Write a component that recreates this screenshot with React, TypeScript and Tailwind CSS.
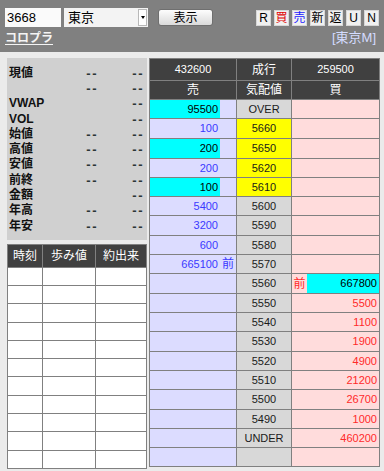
import React from "react";

type Quote = {
  sell?: string;
  sellBar?: boolean;
  sellMark?: string;
  price: string;
  yellow?: boolean;
  buy?: string;
  buyBar?: boolean;
  buyMark?: string;
  h: string;
};

const quotes: Quote[] = [
  { sell: "95500", sellBar: true, price: "OVER", h: "h-[18px]" },
  { sell: "100", price: "5660", yellow: true, h: "h-[19px]" },
  { sell: "200", sellBar: true, price: "5650", yellow: true, h: "h-[19px]" },
  { sell: "200", price: "5620", yellow: true, h: "h-[18px]" },
  { sell: "100", sellBar: true, price: "5610", yellow: true, h: "h-[18px]" },
  { sell: "5400", price: "5600", h: "h-[18px]" },
  { sell: "3200", price: "5590", h: "h-[19px]" },
  { sell: "600", price: "5580", h: "h-[18px]" },
  { sell: "665100", sellMark: "前", price: "5570", h: "h-[18px]" },
  { price: "5560", buyMark: "前", buy: "667800", buyBar: true, h: "h-[19px]" },
  { price: "5550", buy: "5500", h: "h-[18px]" },
  { price: "5540", buy: "1100", h: "h-[18px]" },
  { price: "5530", buy: "1900", h: "h-[19px]" },
  { price: "5520", buy: "4900", h: "h-[18px]" },
  { price: "5510", buy: "21200", h: "h-[18px]" },
  { price: "5500", buy: "26700", h: "h-[19px]" },
  { price: "5490", buy: "1000", h: "h-[18px]" },
  { price: "UNDER", buy: "460200", h: "h-[18px]" },
  { price: "", h: "h-[18px]" },
];

const stats = [
  { label: "現値", a: true },
  { label: "", a: true },
  { label: "VWAP", a: false },
  { label: "VOL", a: false },
  { label: "始値", a: true },
  { label: "高値", a: true },
  { label: "安値", a: true },
  { label: "前終", a: true },
  { label: "金額", a: false },
  { label: "年高", a: true },
  { label: "年安", a: true },
];

const tickRows = [
  "h-[17px]",
  "h-[17px]",
  "h-[18px]",
  "h-[17px]",
  "h-[17px]",
  "h-[17px]",
  "h-[18px]",
  "h-[17px]",
  "h-[17px]",
  "h-[18px]",
  "h-[17px]",
];

const toolButtons = [
  { label: "R", color: "text-black" },
  { label: "買", color: "text-[#e00000]" },
  { label: "売", color: "text-[#1a1aff]" },
  { label: "新", color: "text-black" },
  { label: "返", color: "text-black" },
  { label: "U", color: "text-black" },
  { label: "N", color: "text-black" },
];

const Dash = () => (
  <span className="text-[13px] font-bold tracking-[1.5px] text-[#2b3535]">--</span>
);

export default function App() {
  return (
    <div className="w-[384px] h-[471px] overflow-hidden bg-[#ebebeb] font-['Liberation_Sans','Noto_Sans_CJK_JP',sans-serif]">
      {/* Header bar */}
      <div className="h-[52px] bg-[#808080] px-[5px] pt-[8px]">
        <div className="flex items-start">
          <div className="w-[56px] h-[19px] bg-[#fafafa] flex items-center pl-[2px] text-[13px] text-black">
            3668
          </div>
          <div className="ml-[3px] w-[84px] h-[19px] bg-[#f3f3f3] flex items-center">
            <span className="flex-1 pl-[4px] text-[13px] text-black">東京</span>
            <div className="w-[9px] h-[17px] mr-px bg-white border border-[#b8b8b8] flex items-center justify-center">
              <span className="block w-0 h-0 border-l-[2.5px] border-r-[2.5px] border-t-[3px] border-l-transparent border-r-transparent border-t-black" />
            </div>
          </div>
          <button className="ml-[10px] mt-px w-[55px] h-[17px] rounded-[3px] border border-[#6f6f6f] bg-gradient-to-b from-[#fdfdfd] to-[#dadada] text-[12px] leading-none text-black flex items-center justify-center">
            表示
          </button>
          <div className="ml-auto mt-[2px] flex gap-[3px]">
            {toolButtons.map((b) => (
              <div
                key={b.label}
                className={`w-[15px] h-[16px] bg-[#f0f0f0] border border-[#d6d6d6] flex items-center justify-center text-[12px] leading-none ${b.color}`}
              >
                {b.label}
              </div>
            ))}
          </div>
        </div>
        <div className="mt-[4px] flex items-center justify-between pr-[3px]">
          <span className="text-[12px] font-bold text-[#f4f4f4] underline underline-offset-2 leading-[14px]">
            コロプラ
          </span>
          <span className="text-[13px] text-[#d4dcff] leading-[14px]">[東京M]</span>
        </div>
      </div>

      {/* Body */}
      <div className="flex pt-[6px] pl-[7px] gap-[2px]">
        {/* Left column */}
        <div className="w-[140px] flex flex-col">
          <div className="h-[182px] bg-[#d0d0d0] pt-[7px] pl-[2px] pr-[3px]">
            {stats.map((s, i) => (
              <div key={i} className="h-[15.3px] flex items-center">
                <span className="w-[58px] text-[12px] font-bold text-[#111]">
                  {s.label}
                </span>
                <span className="w-[31px] text-right">{s.a ? <Dash /> : null}</span>
                <span className="flex-1 text-right">
                  <Dash />
                </span>
              </div>
            ))}
          </div>

          <div className="mt-[4px] grid grid-cols-[34px_52px_50px] gap-px bg-[#808080] p-px">
            {["時刻", "歩み値", "約出来"].map((t) => (
              <div
                key={t}
                className="h-[22px] bg-[#404040] text-white text-[12px] flex items-center justify-center"
              >
                {t}
              </div>
            ))}
            {tickRows.map((h, i) => (
              <React.Fragment key={i}>
                <div className={`${h} bg-white`} />
                <div className={`${h} bg-white`} />
                <div className={`${h} bg-white`} />
              </React.Fragment>
            ))}
          </div>
        </div>

        {/* Order board */}
        <div className="w-[231px] self-start grid grid-cols-[86px_54px_87px] gap-px bg-[#808080] p-px text-[11px]">
          <div className="h-[21px] bg-[#404040] text-white flex items-center justify-center">432600</div>
          <div className="h-[21px] bg-[#404040] text-white text-[12px] flex items-center justify-center">成行</div>
          <div className="h-[21px] bg-[#404040] text-white flex items-center justify-center">259500</div>
          <div className="h-[18px] bg-[#404040] text-white text-[12px] flex items-center justify-center">売</div>
          <div className="h-[18px] bg-[#404040] text-white text-[12px] flex items-center justify-center">気配値</div>
          <div className="h-[18px] bg-[#404040] text-white text-[12px] flex items-center justify-center">買</div>

          {quotes.map((q, i) => (
            <React.Fragment key={i}>
              <div className={`${q.h} bg-[#dcdcff] flex`}>
                <div
                  className={`w-[70px] flex items-center justify-end pr-[2px] ${
                    q.sellBar ? "bg-[#00ffff] text-black" : "text-[#3a3aff]"
                  }`}
                >
                  {q.sell}
                </div>
                <div className="flex-1 flex items-center justify-center text-[12px] text-[#3a3aff]">
                  {q.sellMark}
                </div>
              </div>
              <div
                className={`${q.h} ${
                  q.yellow ? "bg-[#ffff00]" : "bg-[#d8d8d8]"
                } flex items-center justify-center text-[#1a1a1a]`}
              >
                {q.price}
              </div>
              <div className={`${q.h} bg-[#ffdcdc] flex`}>
                <div className="w-[15px] flex items-center justify-center text-[12px] text-[#ff2a2a]">
                  {q.buyMark}
                </div>
                <div
                  className={`flex-1 flex items-center justify-end pr-[2px] ${
                    q.buyBar ? "bg-[#00ffff] text-black" : "text-[#ff2a2a]"
                  }`}
                >
                  {q.buy}
                </div>
              </div>
            </React.Fragment>
          ))}
        </div>
      </div>
    </div>
  );
}
